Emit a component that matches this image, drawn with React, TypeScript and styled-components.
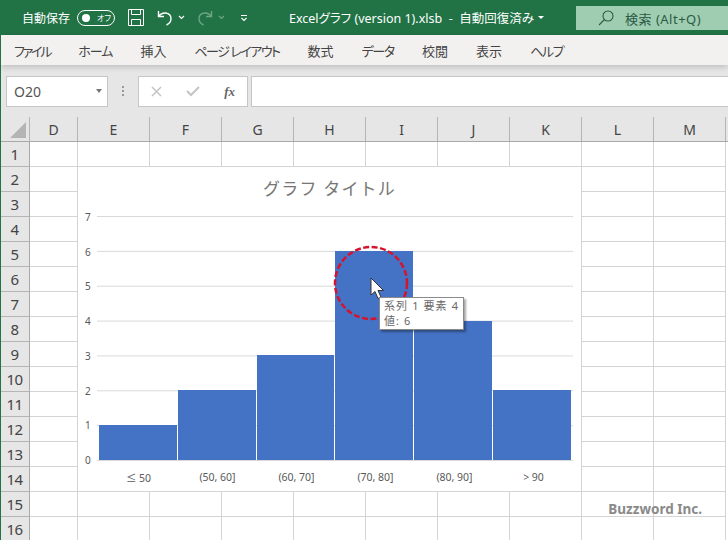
import styled, { createGlobalStyle } from 'styled-components';

const GlobalStyle = createGlobalStyle`
    html, body {
        margin: 0;
        padding: 0;
        background: #fff;
    }
    * {
        box-sizing: border-box;
    }
`;

const fontStack = `"Noto Sans", "Noto Sans CJK JP", sans-serif`;

const Window = styled.div`
    position: relative;
    width: 728px;
    height: 540px;
    overflow: hidden;
    border-left: 1px solid #217346;
    font-family: ${fontStack};
    font-feature-settings: "palt";
    color: #444;
`;

const TitleBar = styled.header`
    display: flex;
    align-items: center;
    height: 35px;
    margin-left: -1px;
    padding-left: 22px;
    background: #217346;
    color: #fff;
`;

const AutoSave = styled.span`
    width: 55px;
    font-size: 12px;
    white-space: nowrap;
`;

const Toggle = styled.span`
    display: flex;
    align-items: center;
    gap: 7px;
    width: 38px;
    height: 16px;
    padding-left: 4px;
    border: 1px solid #fff;
    border-radius: 8px;
    font-size: 8px;
    &::before {
        content: '';
        width: 8px;
        height: 8px;
        border-radius: 50%;
        background: #fff;
    }
`;

const QuickIcon = styled.svg<{ $gap: number; $dim?: boolean }>`
    flex: none;
    margin-left: ${props => props.$gap}px;
    opacity: ${props => (props.$dim ? 0.35 : 1)};
`;

const FileName = styled.span`
    display: flex;
    align-items: center;
    gap: 4px;
    width: 287px;
    margin-left: 41px;
    font-size: 12.5px;
    white-space: pre;
`;

const FileCaret = styled.span`
    width: 0;
    height: 0;
    border-left: 3px solid transparent;
    border-right: 3px solid transparent;
    border-top: 3px solid #fff;
`;

const SearchBox = styled.div`
    display: flex;
    align-items: center;
    gap: 11px;
    flex: 1;
    align-self: flex-start;
    height: 24px;
    margin-top: 6px;
    padding-left: 22px;
    background: #9ecdb2;
    color: #2c5a42;
    font-size: 13px;
    letter-spacing: 0.5px;
    white-space: nowrap;
`;

const MenuBar = styled.nav`
    position: relative;
    display: flex;
    align-items: center;
    gap: 28px;
    height: 30px;
    padding-left: 13px;
    background: #f3f1f0;
    font-size: 13px;
    color: #444;
    box-shadow: 0 2px 6px rgba(0, 0, 0, 0.18);
`;

const MenuItem = styled.span<{ $tight: number }>`
    letter-spacing: ${props => props.$tight}px;
`;

const FormulaArea = styled.div`
    display: flex;
    align-items: flex-start;
    height: 52px;
    padding: 11px 0 0 5px;
    background: #e6e6e6;
`;

const NameBox = styled.div`
    display: flex;
    align-items: center;
    justify-content: space-between;
    width: 102px;
    height: 31px;
    padding: 0 5px 0 7px;
    background: #fff;
    border: 1px solid #c6c6c6;
    font-size: 14px;
    color: #555;
`;

const Caret = styled.span`
    width: 0;
    height: 0;
    margin-bottom: 2px;
    border-left: 3.5px solid transparent;
    border-right: 3.5px solid transparent;
    border-top: 4px solid #777;
`;

const Grip = styled.span`
    width: 2px;
    height: 11px;
    margin: 10px 14px 0 14px;
    background: repeating-linear-gradient(to bottom, #9a9a9a 0 2px, transparent 2px 4px);
`;

const FormulaButtons = styled.div`
    display: flex;
    align-items: center;
    justify-content: space-between;
    width: 110px;
    height: 31px;
    padding: 0 12px;
    background: #fff;
    border: 1px solid #c6c6c6;
`;

const FxLabel = styled.span`
    font-family: "Liberation Serif", serif;
    font-style: italic;
    font-weight: bold;
    font-size: 13px;
    color: #666;
`;

const FormulaInput = styled.div`
    flex: 1;
    height: 31px;
    margin-left: 3px;
    background: #fff;
    border: 1px solid #c6c6c6;
    border-right: 0;
`;

const Sheet = styled.section`
    position: relative;
`;

const HeaderRow = styled.div`
    display: flex;
    height: 25px;
    background: #e6e6e6;
    border-bottom: 1px solid #a9a9a9;
`;

const Corner = styled.div`
    position: relative;
    flex: none;
    width: 29px;
    border-right: 1px solid #b5b5b5;
    &::after {
        content: '';
        position: absolute;
        right: 3px;
        bottom: 3px;
        border-left: 16px solid transparent;
        border-bottom: 16px solid #b4b4b4;
    }
`;

const ColHead = styled.div<{ $width: number }>`
    flex: none;
    display: flex;
    align-items: center;
    justify-content: center;
    width: ${props => props.$width}px;
    border-right: 1px solid #b5b5b5;
    font-size: 14px;
    color: #444;
`;

const Row = styled.div`
    display: flex;
    height: 25px;
`;

const RowHead = styled.div`
    flex: none;
    display: flex;
    align-items: center;
    justify-content: center;
    width: 29px;
    padding-right: 1px;
    background: #e6e6e6;
    border-right: 1px solid #a9a9a9;
    border-bottom: 1px solid #b5b5b5;
    font-size: 15px;
    letter-spacing: -0.5px;
    color: #444;
`;

const Cell = styled.div<{ $width: number }>`
    flex: none;
    width: ${props => props.$width}px;
    border-right: 1px solid #d4d4d4;
    border-bottom: 1px solid #d4d4d4;
`;

const Chart = styled.figure`
    position: absolute;
    left: 77px;
    top: 50px;
    width: 503px;
    height: 324px;
    margin: 0;
    background: #fff;
    display: flex;
    flex-direction: column;
`;

const ChartTitle = styled.figcaption`
    height: 49px;
    padding-top: 8px;
    text-align: center;
    font-size: 17px;
    font-feature-settings: normal;
    letter-spacing: 1.2px;
    color: #767676;
`;

const ChartBody = styled.div`
    display: flex;
    height: 245px;
`;

const YAxis = styled.div`
    display: flex;
    flex-direction: column-reverse;
    justify-content: space-between;
    width: 19px;
    padding: 1px 0 0 7px;
    font-size: 10px;
    line-height: 1px;
    color: #595959;
`;

const Plot = styled.div`
    display: flex;
    align-items: flex-end;
    gap: 1px;
    width: 476px;
    padding: 0 2px;
    border-bottom: 1px solid #d9d9d9;
    background-image: linear-gradient(to bottom, #d9d9d9 1px, transparent 1px);
    background-size: 100% 34.86px;
`;

const Bar = styled.div<{ $value: number }>`
    flex: 1;
    height: ${props => (props.$value / 7) * 100}%;
    background: #4472c4;
`;

const XAxis = styled.div`
    display: flex;
    margin-top: 9px;
    padding-left: 21px;
    width: 495px;
`;

const XLabel = styled.span`
    flex: 1;
    text-align: center;
    font-size: 10.5px;
    color: #595959;
`;

const Highlight = styled.svg`
    position: absolute;
    left: 254px;
    top: 78px;
`;

const Pointer = styled.svg`
    position: absolute;
    left: 292px;
    top: 110px;
`;

const Tooltip = styled.div`
    position: absolute;
    left: 301px;
    top: 130px;
    width: 85px;
    height: 33px;
    padding: 0 0 0 4px;
    background: #fff;
    border: 1px solid #8a8a8a;
    box-shadow: 2px 2px 2px rgba(0, 0, 0, 0.35);
    font-size: 11px;
    font-feature-settings: normal;
    line-height: 15px;
    letter-spacing: 1.1px;
    color: #666;
    white-space: nowrap;
`;

const Watermark = styled.div`
    position: absolute;
    right: 26px;
    bottom: 22px;
    font-size: 13.5px;
    font-weight: 700;
    color: #8a8a8a;
`;

const menus = [
    { label: 'ファイル', tight: -2.2 },
    { label: 'ホーム', tight: -1 },
    { label: '挿入', tight: 0 },
    { label: 'ページ レイアウト', tight: -1.5 },
    { label: '数式', tight: 0 },
    { label: 'データ', tight: -1.3 },
    { label: '校閲', tight: 0 },
    { label: '表示', tight: 0 },
    { label: 'ヘルプ', tight: -1.3 },
];
const columns = [
    { name: 'D', width: 48 },
    { name: 'E', width: 72 },
    { name: 'F', width: 72 },
    { name: 'G', width: 72 },
    { name: 'H', width: 72 },
    { name: 'I', width: 72 },
    { name: 'J', width: 72 },
    { name: 'K', width: 72 },
    { name: 'L', width: 72 },
    { name: 'M', width: 72 },
];
const rows = Array.from({ length: 16 }, (_, i) => i + 1);
const bins = [
    { label: '≤ 50', value: 1 },
    { label: '(50, 60]', value: 2 },
    { label: '(60, 70]', value: 3 },
    { label: '(70, 80]', value: 6 },
    { label: '(80, 90]', value: 4 },
    { label: '> 90', value: 2 },
];

const Chevron = ({ gap, dim }: { gap: number; dim?: boolean }) => (
    <QuickIcon $gap={gap} $dim={dim} width="7" height="5" viewBox="0 0 7 5" fill="none" stroke="#fff" strokeWidth="1.2">
        <path d="M1 1l2.5 2.5L6 1" />
    </QuickIcon>
);

const App: React.FC = () => {
    return (
        <>
            <GlobalStyle />
            <Window>
                <TitleBar>
                    <AutoSave>自動保存</AutoSave>
                    <Toggle>オフ</Toggle>
                    <QuickIcon $gap={13} width="16" height="17" viewBox="0 0 16 17" fill="none" stroke="#fff" strokeWidth="1">
                        <path d="M.5.5h15v16H.5z" />
                        <path d="M3.5.5v5h9v-5M3.5 16.5v-6h9v6" />
                    </QuickIcon>
                    <QuickIcon $gap={13} width="16" height="16" viewBox="0 0 16 16" fill="none" stroke="#fff" strokeWidth="1.4">
                        <path d="M1.5 1v5.5H7" />
                        <path d="M1.7 6.3C3.5 3.8 6 2.7 8.5 3c3.5.5 5.5 3 5.5 5.7 0 2.7-1.5 4.8-4.5 6.3" />
                    </QuickIcon>
                    <Chevron gap={5} />
                    <QuickIcon $gap={12} $dim width="16" height="16" viewBox="0 0 16 16" fill="none" stroke="#fff" strokeWidth="1.4">
                        <path d="M14.5 1v5.5H9" />
                        <path d="M14.3 6.3C12.5 3.8 10 2.7 7.5 3 4 3.5 2 6 2 8.7c0 2.7 1.5 4.8 4.5 6.3" />
                    </QuickIcon>
                    <Chevron gap={5} dim />
                    <QuickIcon $gap={15} width="8" height="8" viewBox="0 0 8 8" fill="none" stroke="#fff" strokeWidth="1.1">
                        <path d="M1 1.5h6M1.5 4L4 6.5 6.5 4" />
                    </QuickIcon>
                    <FileName>
                        Excelグラフ (version 1).xlsb  -  自動回復済み
                        <FileCaret />
                    </FileName>
                    <SearchBox>
                        <svg width="16" height="16" viewBox="0 0 16 16" fill="none" stroke="#2c5a42" strokeWidth="1.1">
                            <circle cx="10" cy="6" r="5" />
                            <path d="M6.5 9.5L1 15" />
                        </svg>
                        検索 (Alt+Q)
                    </SearchBox>
                </TitleBar>
                <MenuBar>
                    {menus.map(menu => (
                        <MenuItem key={menu.label} $tight={menu.tight}>
                            {menu.label}
                        </MenuItem>
                    ))}
                </MenuBar>
                <FormulaArea>
                    <NameBox>
                        O20
                        <Caret />
                    </NameBox>
                    <Grip />
                    <FormulaButtons>
                        <svg width="11" height="11" viewBox="0 0 11 11" stroke="#c4c4c4" strokeWidth="1.5">
                            <path d="M1 1l9 9M10 1l-9 9" />
                        </svg>
                        <svg width="14" height="11" viewBox="0 0 14 11" fill="none" stroke="#c4c4c4" strokeWidth="2">
                            <path d="M1 5l4 4 8-8" />
                        </svg>
                        <FxLabel>fx</FxLabel>
                    </FormulaButtons>
                    <FormulaInput />
                </FormulaArea>
                <Sheet>
                    <HeaderRow>
                        <Corner />
                        {columns.map(col => (
                            <ColHead key={col.name} $width={col.width}>
                                {col.name}
                            </ColHead>
                        ))}
                    </HeaderRow>
                    {rows.map(row => (
                        <Row key={row}>
                            <RowHead>{row}</RowHead>
                            {columns.map(col => (
                                <Cell key={col.name} $width={col.width} />
                            ))}
                        </Row>
                    ))}
                    <Chart>
                        <ChartTitle>グラフ タイトル</ChartTitle>
                        <ChartBody>
                            <YAxis>
                                {[0, 1, 2, 3, 4, 5, 6, 7].map(n => (
                                    <span key={n}>{n}</span>
                                ))}
                            </YAxis>
                            <Plot>
                                {bins.map(bin => (
                                    <Bar key={bin.label} $value={bin.value} />
                                ))}
                            </Plot>
                        </ChartBody>
                        <XAxis>
                            {bins.map(bin => (
                                <XLabel key={bin.label}>{bin.label}</XLabel>
                            ))}
                        </XAxis>
                        <Highlight width="78" height="78" viewBox="0 0 78 78" fill="none" stroke="#d5132e" strokeWidth="2.5">
                            <circle cx="39" cy="38" r="36" strokeDasharray="6 2.5" />
                        </Highlight>
                        <Pointer width="15" height="23" viewBox="0 0 15 23">
                            <path d="M1 1v17l4-3.5 3 7 3-1.3-3-6.7h5.5z" fill="#fff" stroke="#333" strokeWidth="1" />
                        </Pointer>
                        <Tooltip>
                            系列 1 要素 4
                            <br />
                            値: 6
                        </Tooltip>
                    </Chart>
                </Sheet>
                <Watermark>Buzzword Inc.</Watermark>
            </Window>
        </>
    );
};

export default App;
